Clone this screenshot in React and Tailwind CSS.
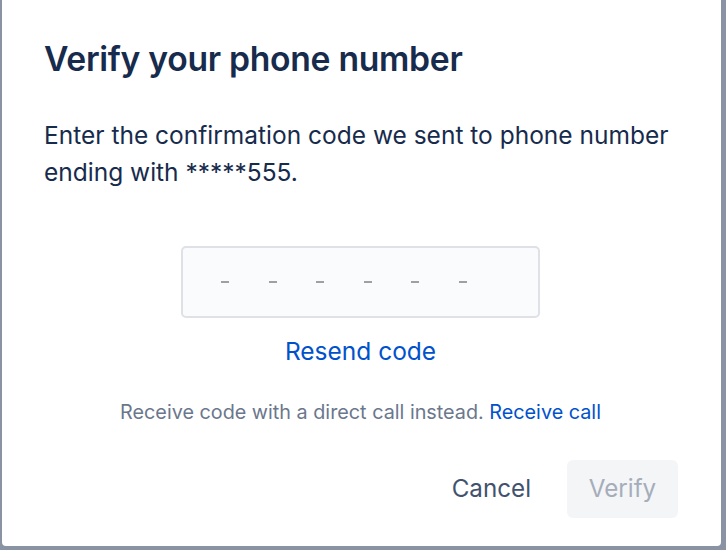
export default function App() {
  const slots = [0, 1, 2, 3, 4, 5];

  return (
    <div
      className="w-[726px] h-[550px] overflow-hidden bg-[#8993a4] pl-[2px] pr-[5px]"
      style={{ fontFamily: "Inter, 'Noto Sans', sans-serif" }}
    >
      <div className="bg-white h-[549px] -mt-[3px] rounded-[4px] flex flex-col pt-[42px] pl-[42px] pr-[44px] pb-[28px]">
        <h1 className="text-[33.7px] leading-[40px] font-semibold text-[#172b4d] tracking-[-0.3px]">
          Verify your phone number
        </h1>

        <p className="mt-[38px] text-[24.5px] leading-[37px] text-[#172b4d]">
          Enter the confirmation code we sent to phone number ending with *****555.
        </p>

        <div className="mt-[55px] flex flex-col items-center">
          <div className="w-[359px] h-[72px] border-2 border-[#dfe1e6] bg-[#fafbfc] rounded-[5px] flex items-center pl-[38px] gap-[39.6px]">
            {slots.map((i) => (
              <span key={i} className="block w-[8px] h-[2px] bg-[#a0a0a0]" />
            ))}
          </div>

          <button className="mt-[18px] text-[24.5px] leading-[30px] text-[#0052cc]">
            Resend code
          </button>

          <p className="mt-[34px] text-[19.8px] leading-[24px] text-[#6b778c]">
            Receive code with a direct call instead.{" "}
            <a className="text-[#0052cc] cursor-pointer">Receive call</a>
          </p>
        </div>

        <div className="mt-auto flex justify-end items-center gap-[16px] -mr-[1px]">
          <button className="h-[58px] px-[20px] text-[24.2px] text-[#42526e]">
            Cancel
          </button>
          <button
            disabled
            className="h-[58px] w-[111px] rounded-[6px] bg-[#f4f5f7] text-[24.2px] text-[#a5adba]"
          >
            Verify
          </button>
        </div>
      </div>
    </div>
  );
}
